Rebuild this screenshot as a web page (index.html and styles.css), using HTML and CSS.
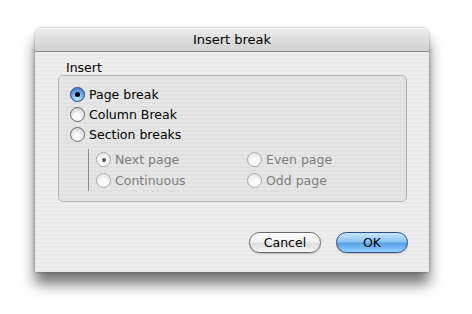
FILE: index.html
```html
<!DOCTYPE html>
<html>
<head>
<meta charset="utf-8">
<link rel="stylesheet" href="styles.css">
</head>
<body>
<div class="window">
  <div class="titlebar">Insert break</div>
  <div class="content">
    <div class="group-label">Insert</div>
    <div class="group">
      <div class="row"><span class="radio on"></span><span class="lbl">Page break</span></div>
      <div class="row"><span class="radio"></span><span class="lbl">Column Break</span></div>
      <div class="row"><span class="radio"></span><span class="lbl">Section breaks</span></div>
      <div class="sub">
        <div class="subgrid">
          <div class="row dis"><span class="radio dot"></span><span class="lbl">Next page</span></div>
          <div class="row dis"><span class="radio"></span><span class="lbl">Even page</span></div>
          <div class="row dis"><span class="radio"></span><span class="lbl">Continuous</span></div>
          <div class="row dis"><span class="radio"></span><span class="lbl">Odd page</span></div>
        </div>
      </div>
    </div>
    <div class="buttons">
      <button class="btn">Cancel</button>
      <button class="btn default">OK</button>
    </div>
  </div>
</div>
</body>
</html>
```
FILE: styles.css
```css
html, body {
  margin: 0;
  padding: 0;
  background: #ffffff;
}
body {
  font-family: "DejaVu Sans", "Liberation Sans", sans-serif;
  font-size: 12.5px;
  color: #000;
  padding-top: 28px;
  height: 314px;
  box-sizing: border-box;
}
.window {
  margin: 0 0 0 35px;
  width: 394px;
  height: 244px;
  border-radius: 7px 7px 0 0;
  box-shadow: 0 12px 14px rgba(0,0,0,0.55), 0 0 3px rgba(0,0,0,0.35);
  background: repeating-linear-gradient(to bottom, #eeeeee 0, #eeeeee 2px, #e9e9e9 2px, #e9e9e9 4px);
  overflow: hidden;
}
.titlebar {
  height: 22px;
  line-height: 22px;
  text-align: center;
  font-size: 13px;
  background: linear-gradient(to bottom, #ececec 0%, #dcdcdc 50%, #d2d2d2 100%);
  border-top: 1px solid #f4f4f4;
  border-bottom: 1px solid #8e8e8e;
}
.content {
  padding: 0 21px 0 23px;
  display: flex;
  flex-direction: column;
}
.group-label {
  margin: 8px 0 0 8px;
  height: 15px;
  line-height: 15px;
}
.group {
  margin-right: 1px;
  height: 127px;
  box-sizing: border-box;
  border: 1px solid #b2b2b2;
  border-radius: 5px;
  background: repeating-linear-gradient(to bottom, #e6e6e6 0, #e6e6e6 2px, #e1e1e1 2px, #e1e1e1 4px);
  padding: 8px 0 0 11px;
  display: flex;
  flex-direction: column;
}
.row {
  display: flex;
  align-items: center;
  height: 20px;
}
.radio {
  width: 15px;
  height: 15px;
  box-sizing: border-box;
  border-radius: 50%;
  border: 1px solid #666;
  background: radial-gradient(circle at 50% 75%, #ffffff 0%, #f4f4f4 40%, #cccccc 100%);
  margin-right: 4px;
  display: flex;
  align-items: center;
  justify-content: center;
  flex: none;
}
.radio.on {
  border-color: #243f7a;
  background: radial-gradient(circle at 50% 80%, #c4e9ff 0%, #6fb4ef 45%, #3470c2 100%);
}
.radio.on::after, .radio.dot::after {
  content: "";
  width: 5px;
  height: 5px;
  border-radius: 50%;
  background: #000;
}
.dis .radio {
  border-color: #a8a8a8;
  background: radial-gradient(circle at 50% 75%, #ffffff 0%, #f6f6f6 50%, #e0e0e0 100%);
}
.radio.dot::after {
  width: 4px;
  height: 4px;
  background: #555;
}
.dis .lbl {
  color: #7d7d7d;
}
.sub {
  margin: 5px 0 0 18px;
  border-left: 1px solid #8a8a8a;
  height: 42px;
  padding-left: 7px;
}
.subgrid {
  display: grid;
  grid-template-columns: 151px auto;
}
.subgrid .row {
  height: 21px;
}
.buttons {
  display: flex;
  justify-content: flex-end;
  gap: 15px;
  margin-top: 30px;
}
.btn {
  width: 72px;
  height: 21px;
  border-radius: 11px;
  font-family: "DejaVu Sans", "Liberation Sans", sans-serif;
  font-size: 12.5px;
  padding: 0;
  border: 1px solid #6a6a6a;
  background: linear-gradient(to bottom, #ffffff 0%, #f2f2f2 45%, #dedede 55%, #f5f5f5 100%);
  color: #000;
  box-shadow: 0 1px 1px rgba(0,0,0,0.2);
}
.btn.default {
  border-color: #2c4c8c;
  background: linear-gradient(to bottom, #c8e6ff 0%, #8cc5f4 45%, #5aa2e6 55%, #8fd0ff 100%);
}
```
